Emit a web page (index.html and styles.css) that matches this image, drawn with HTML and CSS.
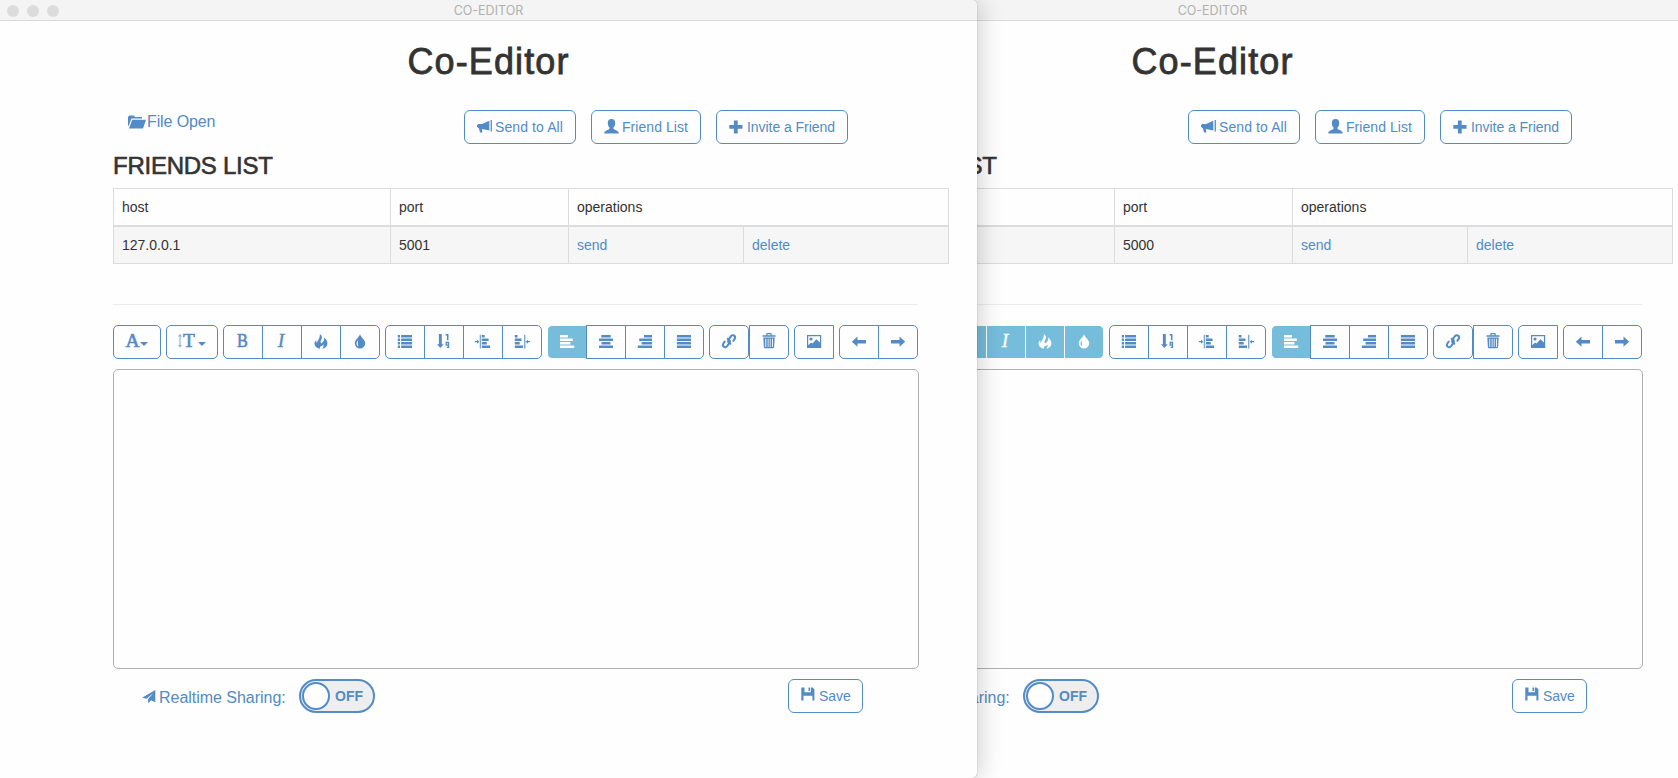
FILE: index.html
```html
<!DOCTYPE html>
<html lang="en">
<head>
<meta charset="utf-8">
<title>CO-EDITOR</title>
<link rel="stylesheet" href="styles.css">
</head>
<body>
<svg class="sprite" aria-hidden="true">
  <symbol id="folder" viewBox="0 0 18 14"><path d="M0 11.5V2L1.3.6h4.5L7 2h7v1.6H3.4L1 10zM1 13.5 4.2 4.7H18l-3 8.8z"/></symbol>
  <symbol id="horn" viewBox="0 0 16 14"><path d="M0 5.2 1.2 4H5L12.3.8v9.800L6.500 9.200H4.800l.6 3.200H3l-1-4L1.400 8 0 6.800zM13.600 0h1.300v11.600h-1.300z"/></symbol>
  <symbol id="user" viewBox="0 0 15 15"><path d="M7.5 0c2.500 0 3.700 1.600 3.700 3.900 0 2-.7 3.700-1.700 4.700v1.200c0 .8 5.200 1.800 5.200 4.200v.6H.3V14c0-2.400 5.200-3.400 5.200-4.200V8.600C4.500 7.600 3.800 5.900 3.800 3.900 3.800 1.600 5 0 7.500 0z"/></symbol>
  <symbol id="plus" viewBox="0 0 14 14"><path d="M4.900.5h3.800V5h4.800v3.700H8.700v4.800H4.900V8.700H.3V5h4.600z"/></symbol>
  <symbol id="fire" viewBox="0 0 16 16"><path d="M6.800.2C9.600 1.700 9.300 4 8 6.300c-.7 1.300-.4 2.400.3 3.100C10.400 8.300 11.700 6.500 11 3.600c2.500 1.800 4.300 5 3 8-.7 1.600-2.400 2.800-4.700 3.100.9-1.200 1.500-2.500 1.300-4.200-1 1.200-2 1.700-2.900 1.700-.8.900-.9 1.700-.6 2.500C4.300 14.300 2 12.600 1.600 10.500c-.3-1.700.3-3.300 1.700-4.500-.2 1.300 0 2.200.7 3C3.900 6.900 7.300 4.300 6.800.2z"/></symbol>
  <symbol id="drop" viewBox="0 0 16 16"><path fill-rule="evenodd" d="M8 0c.6 3.400 5.200 5.400 5.200 9.200a5.200 5.200 0 0 1-10.400 0C2.800 5.400 7.400 3.400 8 0zM6.200 6.200C4.800 7.700 4.300 9 4.600 10.300c.2 1 .9 1.800 1.900 2.200-.7-1.800-.9-3.800-.3-6.300z"/></symbol>
  <symbol id="list" viewBox="0 0 16 16"><path d="M.8 1.100H3v2.300H.8zM4.100 1.100H15v2.300H4.100zM.8 4.600H3v2.300H.8zM4.100 4.600H15v2.300H4.100zM.8 8.100H3v2.300H.8zM4.100 8.100H15v2.300H4.100zM.8 11.600H3v2.300H.8zM4.100 11.600H15v2.300H4.100z"/></symbol>
  <symbol id="order" viewBox="0 0 16 16"><path d="M2.900 0h2.900v10.300h1.900L4.300 14 1 10.300h1.900zM9.600 0h2.900v6.200h-1.600V1.500H9.600z"/><path fill="none" stroke="currentColor" stroke-width="1.300" d="M12.400 11.200h-2.200V8.500h2.300v4.900H10.700"/></symbol>
  <symbol id="outdent" viewBox="0 0 16 16"><path d="M-.2 7H2V5.700L4.300 7.700 2 9.700V8.300H-.2z"/><path opacity=".75" d="M4.700.8h1.400v13.600H4.700z"/><path d="M6.900 1.100h2.800v2.300H6.900zM6.900 4.600h6.700v2.300H6.900zM6.900 8.100h4.900v2.300H6.900zM6.900 11.600h8.200v2.300H6.900z"/></symbol>
  <symbol id="indent" viewBox="0 0 16 16"><path d="M16 7h-2V5.700l-2.300 2 2.300 2V8.300h2z"/><path opacity=".75" d="M10 .8h1.400v13.600H10z"/><path d="M.8 1.100h2.700v2.300H.8zM.8 4.600h6.700v2.300H.8zM.8 8.100h4.900v2.300H.8zM.8 11.600H9v2.300H.8z"/></symbol>
  <symbol id="left" viewBox="0 0 16 16"><path d="M1 1.100h8v2.300H1zM1 4.600h12.800v2.300H1zM1 8.100h10.400v2.300H1zM1 11.600h14.200v2.300H1z"/></symbol>
  <symbol id="center" viewBox="0 0 16 16"><path d="M3.300 1.100h9.400v2.300H3.300zM1 4.600h14v2.300H1zM3.500 8.100h9v2.300h-9zM1 11.600h14v2.300H1z"/></symbol>
  <symbol id="right" viewBox="0 0 16 16"><path d="M7 1.100h8v2.300H7zM2.200 4.600H15v2.300H2.200zM4.600 8.100H15v2.300H4.600zM.8 11.600H15v2.300H.8z"/></symbol>
  <symbol id="justify" viewBox="0 0 16 16"><path d="M.9 1.100H15v2.300H.9zM.9 4.600H15v2.300H.9zM.9 8.100H15v2.300H.9zM.9 11.600H15v2.300H.9z"/></symbol>
  <symbol id="link" viewBox="0 0 16 16"><g fill="none" stroke="currentColor" stroke-width="2" stroke-linecap="round" stroke-linejoin="round"><path d="M9.300 9.700C7.100 8.900 6.500 7.100 7.600 5.500L9.800 2.400C10.700 1 12.200.8 13.200 1.600s1.200 2.200.3 3.500L12.300 6.800"/><path d="M6.700 4.700C8.900 5.500 9.500 7.300 8.400 8.900L6.200 12C5.300 13.400 3.800 13.600 2.800 12.800S1.600 10.600 2.500 9.300L3.700 7.600"/></g></symbol>
  <symbol id="trash" viewBox="0 0 16 16"><path fill-rule="evenodd" d="M5.300 1.300V-.2Q5.300-1 6.100-1h3.800q.8 0 .8.800v1.500h3.800v1.500H1.600V1.300zM6.500 1.300h3V.2h-3zM2.300 3.600h11.400l-.6 9.700q-.1 1-1 1H3.900q-1 0-1-1zM4.300 4.800v8.200h.9V4.800zm2.400 0v8.200h.8V4.800zm2.100 0v8.200h.8V4.800zm2.200 0v8.200h.9V4.800z"/></symbol>
  <symbol id="picture" viewBox="0 0 16 16"><path fill-rule="evenodd" d="M1 1h14.200v13H1zM2.200 2.200v9L5 8.400l1.500 1.200 3.800-4.400 3.700 3.300V2.200z"/><circle cx="5" cy="5" r="1.600"/></symbol>
  <symbol id="back" viewBox="0 0 16 16"><path d="M.8 7.700 6.500 2.600v3.300H15v3.600H6.500v3.300z"/></symbol>
  <symbol id="forward" viewBox="0 0 16 16"><path d="M15.200 7.700 9.500 2.600v3.300H1v3.600h8.500v3.300z"/></symbol>
  <symbol id="updown" viewBox="0 0 4 14"><path d="M2 0 4 2.500H2.500v8.500H4L2 13.500 0 11h1.500V2.500H0z"/></symbol>
  <symbol id="caret" viewBox="0 0 8 4"><path d="M0 0h8L4 4z"/></symbol>
  <symbol id="plane" viewBox="0 0 14 14"><path d="M13.300 0v12.300L9 10.300l-2.700 2.900-.3-4L11.300 3 4.700 8.700 0 7.700z"/></symbol>
  <symbol id="disk" viewBox="0 0 14 14"><path d="M.3.500h3.200v4.700h6.300V.5h1.700l1.900 1.800v11.300h-2V8.700H2.500v4.900H.3zM7.500.5H9v3.400H7.500z"/></symbol>
</svg>

<div class="desktop">
  <section class="window window-back">
    <header class="titlebar"><span class="lights"><i></i><i></i><i></i></span><span class="caption">CO-EDITOR</span></header>
    <h1>Co-Editor</h1>
    <div class="content">
      <div class="actions">
        <a class="open"><svg><use href="#folder"/></svg>File Open</a>
        <div class="action-buttons">
          <button class="btn send"><svg class="horn"><use href="#horn"/></svg><span>Send to All</span></button>
          <button class="btn friends"><svg class="user"><use href="#user"/></svg><span>Friend List</span></button>
          <button class="btn invite"><svg class="plus"><use href="#plus"/></svg><span>Invite a Friend</span></button>
        </div>
      </div>
      <h3>FRIENDS LIST</h3>
      <table>
        <colgroup><col class="c-host"><col class="c-port"><col class="c-send"><col class="c-delete"></colgroup>
        <tr class="head"><td>host</td><td>port</td><td colspan="2">operations</td></tr>
        <tr class="row"><td>127.0.0.1</td><td>5000</td><td><a>send</a></td><td><a>delete</a></td></tr>
      </table>
      <hr>
      <div class="toolbar">
        <div class="group"><button class="tool font"><b class="g-a">A</b><svg class="caret"><use href="#caret"/></svg></button></div>
        <div class="group"><button class="tool size"><svg class="updown"><use href="#updown"/></svg><b class="g-t">T</b><svg class="caret"><use href="#caret"/></svg></button></div>
        <div class="group"><button class="tool on"><b class="g-b">B</b></button><button class="tool on"><b class="g-i">I</b></button><button class="tool on"><svg><use href="#fire"/></svg></button><button class="tool on"><svg><use href="#drop"/></svg></button></div>
        <div class="group"><button class="tool"><svg><use href="#list"/></svg></button><button class="tool"><svg><use href="#order"/></svg></button><button class="tool"><svg><use href="#outdent"/></svg></button><button class="tool"><svg><use href="#indent"/></svg></button></div>
        <div class="group"><button class="tool on"><svg><use href="#left"/></svg></button><button class="tool"><svg><use href="#center"/></svg></button><button class="tool"><svg><use href="#right"/></svg></button><button class="tool"><svg><use href="#justify"/></svg></button></div>
        <div class="group links"><button class="tool whole"><svg><use href="#link"/></svg></button><button class="tool"><svg><use href="#trash"/></svg></button></div>
        <div class="group"><button class="tool open-end"><svg><use href="#picture"/></svg></button></div>
        <div class="group"><button class="tool"><svg><use href="#back"/></svg></button><button class="tool"><svg><use href="#forward"/></svg></button></div>
      </div>
      <div class="editor"></div>
      <footer>
        <span class="sharing"><svg><use href="#plane"/></svg>Realtime Sharing:</span>
        <span class="switch"><i></i><b>OFF</b></span>
        <button class="btn save"><svg class="disk"><use href="#disk"/></svg><span>Save</span></button>
      </footer>
    </div>
  </section>

  <section class="window window-front">
    <header class="titlebar"><span class="lights"><i></i><i></i><i></i></span><span class="caption">CO-EDITOR</span></header>
    <h1>Co-Editor</h1>
    <div class="content">
      <div class="actions">
        <a class="open"><svg><use href="#folder"/></svg>File Open</a>
        <div class="action-buttons">
          <button class="btn send"><svg class="horn"><use href="#horn"/></svg><span>Send to All</span></button>
          <button class="btn friends"><svg class="user"><use href="#user"/></svg><span>Friend List</span></button>
          <button class="btn invite"><svg class="plus"><use href="#plus"/></svg><span>Invite a Friend</span></button>
        </div>
      </div>
      <h3>FRIENDS LIST</h3>
      <table>
        <colgroup><col class="c-host"><col class="c-port"><col class="c-send"><col class="c-delete"></colgroup>
        <tr class="head"><td>host</td><td>port</td><td colspan="2">operations</td></tr>
        <tr class="row"><td>127.0.0.1</td><td>5001</td><td><a>send</a></td><td><a>delete</a></td></tr>
      </table>
      <hr>
      <div class="toolbar">
        <div class="group"><button class="tool font"><b class="g-a">A</b><svg class="caret"><use href="#caret"/></svg></button></div>
        <div class="group"><button class="tool size"><svg class="updown"><use href="#updown"/></svg><b class="g-t">T</b><svg class="caret"><use href="#caret"/></svg></button></div>
        <div class="group"><button class="tool"><b class="g-b">B</b></button><button class="tool"><b class="g-i">I</b></button><button class="tool"><svg><use href="#fire"/></svg></button><button class="tool"><svg><use href="#drop"/></svg></button></div>
        <div class="group"><button class="tool"><svg><use href="#list"/></svg></button><button class="tool"><svg><use href="#order"/></svg></button><button class="tool"><svg><use href="#outdent"/></svg></button><button class="tool"><svg><use href="#indent"/></svg></button></div>
        <div class="group"><button class="tool on"><svg><use href="#left"/></svg></button><button class="tool"><svg><use href="#center"/></svg></button><button class="tool"><svg><use href="#right"/></svg></button><button class="tool"><svg><use href="#justify"/></svg></button></div>
        <div class="group links"><button class="tool whole"><svg><use href="#link"/></svg></button><button class="tool"><svg><use href="#trash"/></svg></button></div>
        <div class="group"><button class="tool open-end"><svg><use href="#picture"/></svg></button></div>
        <div class="group"><button class="tool"><svg><use href="#back"/></svg></button><button class="tool"><svg><use href="#forward"/></svg></button></div>
      </div>
      <div class="editor"></div>
      <footer>
        <span class="sharing"><svg><use href="#plane"/></svg>Realtime Sharing:</span>
        <span class="switch"><i></i><b>OFF</b></span>
        <button class="btn save"><svg class="disk"><use href="#disk"/></svg><span>Save</span></button>
      </footer>
    </div>
  </section>
</div>
</body>
</html>
```

FILE: styles.css
```css
* { box-sizing: border-box; }
body {
  margin: 0;
  background: #fefefe;
  color: #333;
  font: 14px/20px "Liberation Sans", Arial, sans-serif;
}
svg { display: block; flex: none; width: 16px; height: 16px; fill: currentColor; overflow: visible; }
symbol { overflow: visible; }
.sprite { position: absolute; width: 0; height: 0; }
.desktop { position: relative; width: 1678px; height: 778px; overflow: hidden; }

.window { position: absolute; top: 0; width: 977px; height: 778px; background: #fefefe; overflow: hidden; }
.window-back { left: 724px; }
.window-front {
  left: 0;
  border-radius: 0 5px 5px 0;
  box-shadow: 0 0 1px rgba(0, 0, 0, .5), 2px 0 24px rgba(0, 0, 0, .2);
}

.titlebar {
  display: grid;
  grid-template-columns: 100px 1fr 100px;
  align-items: center;
  height: 21px;
  border-bottom: 1px solid #d9d9d9;
  background: #f4f4f4;
}
.lights { display: flex; gap: 8px; padding-left: 7px; }
.lights i { width: 12px; height: 12px; border-radius: 50%; background: #dcdcdc; }
.caption { padding-top: 1px; text-align: center; color: #b0b0b0; font: 12.5px/20px Inter, sans-serif; }

h1 { margin: 21px 0 0; height: 40px; text-align: center; font-size: 36px; line-height: 40px; font-weight: 400; letter-spacing: 1.1px; -webkit-text-stroke: .8px #333; }
.content { padding-left: 113px; }

.actions { display: flex; height: 66px; padding-top: 28px; }
.open { display: flex; align-items: center; height: 24px; width: 351px; padding-left: 15px; gap: 1px; color: #528bc5; font-size: 16px; letter-spacing: -.12px; }
.open svg { width: 18px; height: 14px; }
.action-buttons { display: flex; gap: 15px; }
.btn {
  display: flex;
  align-items: center;
  height: 34px;
  padding: 0 0 0 12px;
  border: 1px solid #528bc5;
  border-radius: 6px;
  background: transparent;
  color: #528bc5;
  font: inherit;
  white-space: nowrap;
}
.send { width: 112px; gap: 2px; letter-spacing: .1px; }
.friends { width: 110px; gap: 3px; letter-spacing: .05px; }
.invite { width: 132px; gap: 4px; letter-spacing: -.05px; }
.horn { width: 16px; height: 14px; }
.user { width: 15px; height: 15px; margin-top: -2px; }
.plus { width: 14px; height: 14px; margin-top: -1px; }

h3 { margin: 5px 0 0; height: 35px; font-size: 24px; line-height: 26px; font-weight: 400; letter-spacing: -.25px; -webkit-text-stroke: .6px #333; }

table { width: 836px; table-layout: fixed; border-collapse: separate; border-spacing: 0; }
.c-host { width: 277px; }
.c-port { width: 178px; }
.c-send { width: 175px; }
.c-delete { width: 206px; }
td { padding: 0 8px; border-left: 1px solid #dcdcdc; }
td:last-child { border-right: 1px solid #dcdcdc; }
.head td { height: 39px; border-top: 1px solid #dcdcdc; border-bottom: 2px solid #dcdcdc; }
.row td { height: 37px; border-bottom: 1px solid #dcdcdc; background: #f6f6f6; }
a { color: #528bc5; }

hr { width: 805px; height: 1px; margin: 40px 0 20px; border: 0; background: #ececec; }

.toolbar { display: flex; gap: 5px; height: 34px; }
.group { display: flex; }
.tool {
  display: flex;
  align-items: center;
  justify-content: center;
  width: 40px;
  height: 34px;
  padding: 0;
  border: 1px solid #528bc5;
  background: #fefefe;
  color: #528bc5;
}
.tool + .tool { margin-left: -1px; }
.links .tool + .tool { margin-left: 0; }
.tool:first-child { border-top-left-radius: 5px; border-bottom-left-radius: 5px; }
.tool:last-child { border-top-right-radius: 5px; border-bottom-right-radius: 5px; }
.tool.whole { border-radius: 5px; }
.tool.open-end { border-top-right-radius: 0; border-bottom-right-radius: 0; }
.tool.on { border-color: #fefefe; background: #75bddb; color: #fefefe; }
.font { width: 48px; }
.size { width: 52px; }
.tool .caret { width: 8px; height: 4px; margin-top: 3px; }
.tool .updown { width: 4px; height: 14px; margin-top: -2px; opacity: .7; }
.tool b { font: 400 19.5px/20px "Liberation Serif", serif; -webkit-text-stroke: .6px currentColor; margin-top: -2px; }
.tool .g-a { margin-left: -1px; }
.tool .g-t { padding: 0 3px 0 1px; }
.tool .g-b { font-size: 19px; margin-left: -2px; transform: scaleX(.85); }
.tool .g-i { font-style: italic; margin-left: -2px; -webkit-text-stroke-width: .3px; }

.editor { width: 806px; height: 300px; margin-top: 10px; border: 1px solid #b0b0b0; border-radius: 5px; }

footer { display: flex; height: 44px; padding: 10px 0 0 29px; color: #528bc5; }
.sharing { display: flex; gap: 3px; width: 157px; align-items: center; height: 36px; padding-top: 1px; font-size: 16px; letter-spacing: -.03px; white-space: nowrap; }
.sharing svg { width: 14px; height: 14px; margin-top: -1px; }
.switch { display: flex; align-items: center; width: 76px; height: 34px; padding-left: 1px; border: 2px solid #528bc5; border-radius: 17px; background: #eee; }
.switch i { width: 28px; height: 28px; border: 2px solid #528bc5; border-radius: 50%; background: #fefefe; }
.switch b { margin-left: 5px; font-size: 14px; }
.save { width: 75px; margin-left: 413px; gap: 4px; }
.disk { width: 14px; height: 14px; margin-top: -5px; }
```
